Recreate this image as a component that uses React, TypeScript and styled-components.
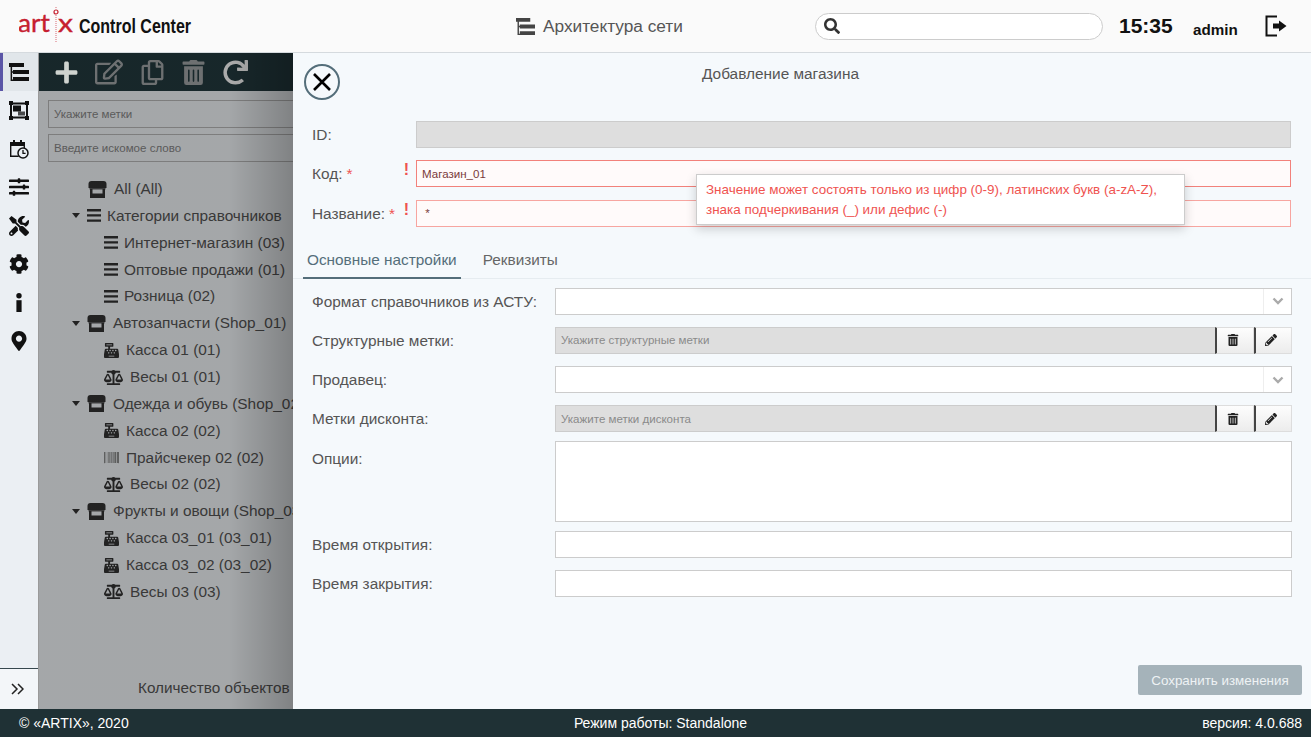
import React from "react";
import styled, { createGlobalStyle } from "styled-components";
import {
  FaBalanceScale,
  FaBarcode,
  FaCashRegister,
  FaCog,
  FaMapMarkerAlt,
  FaPencilAlt,
  FaPlus,
  FaRedo,
  FaRegCopy,
  FaRegEdit,
  FaSearch,
  FaSlidersH,
  FaTools,
  FaTrashAlt,
} from "react-icons/fa";

const GlobalStyle = createGlobalStyle`
  html, body {
    margin: 0;
    height: 100%;
    overflow: hidden;
    font-family: "Liberation Sans", Arial, sans-serif;
  }
  #root {
    height: 100%;
  }
  * {
    box-sizing: border-box;
  }
`;

const Page = styled.div`
  display: flex;
  flex-direction: column;
  width: 1311px;
  height: 737px;
  background: #f5f9fc;
`;

/* top bar */
const Header = styled.header`
  display: grid;
  grid-template-columns: 516px 299px 304px 74px 71px 47px;
  align-items: center;
  height: 53px;
  flex: none;
  background: #fafafa;
  border-bottom: 1px solid #d5dade;
`;

const Brand = styled.div`
  display: flex;
  align-items: center;
  padding-left: 19px;
`;

const Logo = styled.svg`
  width: 54px;
  height: 38px;
  flex: none;
  text {
    font-family: Lato, sans-serif;
    font-size: 25px;
    fill: #c6202f;
    stroke: #c6202f;
    stroke-width: 0.35px;
  }
`;

const BrandName = styled.span`
  display: inline-block;
  font-weight: 700;
  font-size: 20px;
  color: #111;
  margin-left: 6px;
  white-space: nowrap;
  transform: scaleX(0.8);
  transform-origin: left center;
`;

const PageTitle = styled.div`
  display: flex;
  align-items: center;
  gap: 8px;
  font-size: 17.25px;
  color: #555;
  svg {
    width: 19px;
    height: 19px;
    color: #444;
  }
`;

const SearchBox = styled.div`
  display: flex;
  align-items: center;
  width: 288px;
  height: 27px;
  padding-left: 8px;
  background: #fff;
  border: 1px solid #ccc;
  border-radius: 14px;
  font-size: 16px;
  color: #333;
`;

const Clock = styled.div`
  font-size: 21px;
  font-weight: 700;
  color: #111;
`;

const UserName = styled.div`
  font-size: 15.2px;
  font-weight: 700;
  color: #111;
  margin-top: 6px;
`;

const Logout = styled.svg`
  width: 25px;
  height: 24px;
`;

const Body = styled.div`
  display: flex;
  flex: 1;
  min-height: 0;
`;

/* left rail */
const Rail = styled.nav`
  display: flex;
  flex-direction: column;
  width: 38px;
  flex: none;
  background: #ebeff3;
`;

const RailItem = styled.div<{ $active?: boolean }>`
  display: flex;
  align-items: center;
  justify-content: center;
  height: 38.4px;
  flex: none;
  font-size: 20px;
  color: #111;
  background: ${(p) => (p.$active ? "#e1e6ea" : "transparent")};
  box-shadow: ${(p) => (p.$active ? "inset 3px 0 0 #5a55a6" : "none")};
  svg {
    display: block;
  }
`;

const RailFooter = styled.div`
  display: flex;
  align-items: center;
  justify-content: center;
  height: 41px;
  margin-top: auto;
  border-top: 1px solid #36474d;
  background: #f3f6f9;
  padding-right: 3px;
`;

/* dimmed list behind the drawer */
const Main = styled.main`
  position: relative;
  display: flex;
  flex-direction: column;
  flex: 1;
  min-width: 0;
  overflow: hidden;
  background: #f5f9fc;
  border-left: 1px solid #9a9a9a;
`;

const Toolbar = styled.div`
  display: flex;
  align-items: center;
  height: 38px;
  flex: none;
  padding-left: 15px;
  background: #233a3f;
`;

const ToolButton = styled.span<{ $left: number; $size?: number; $bright?: boolean; $lifted?: boolean }>`
  position: relative;
  z-index: ${(p) => (p.$lifted ? 1 : 0)};
  display: flex;
  margin-left: ${(p) => p.$left}px;
  font-size: ${(p) => p.$size ?? 25}px;
  color: ${(p) => (p.$lifted ? "#cfd3cf" : p.$bright ? "#ffffff" : "#a3a7a9")};
`;

const FilterInput = styled.input`
  display: block;
  width: 400px;
  height: 28px;
  margin: 0 0 6px 9px;
  padding: 0 5px;
  background: #f5f9fc;
  border: 1px solid #bbb;
  font-family: inherit;
  font-size: 11.55px;
  &::placeholder {
    color: #888;
    opacity: 1;
  }
`;

const Filters = styled.div`
  padding-top: 9px;
  flex: none;
`;

const Tree = styled.ul`
  list-style: none;
  margin: 0;
  padding: 7.6px 0 0;
`;

const TreeRow = styled.li<{ $indent: number }>`
  display: flex;
  align-items: center;
  height: 26.87px;
  padding-left: ${(p) => p.$indent}px;
  gap: 7px;
  font-size: 15.4px;
  color: #555;
  white-space: nowrap;
`;

const Caret = styled.span`
  width: 0;
  height: 0;
  border-left: 4.5px solid transparent;
  border-right: 4.5px solid transparent;
  border-top: 5px solid #333;
`;

const TreeIcon = styled.span<{ $size?: number; $muted?: boolean }>`
  display: flex;
  font-size: ${(p) => p.$size ?? 15}px;
  color: ${(p) => (p.$muted ? "#666" : "#333")};
`;

const StoreSvg = styled.svg`
  display: block;
  width: 19px;
  height: 17px;
  color: #333;
`;

const BarsSvg = styled.svg`
  display: block;
  width: 14px;
  height: 13px;
  margin-right: -1px;
  color: #333;
`;

const MainFooter = styled.div`
  margin-top: auto;
  padding: 0 0 12px 99px;
  font-size: 15.3px;
  line-height: 18px;
  color: #555;
  white-space: nowrap;
`;

const Dim = styled.div`
  position: absolute;
  inset: 0;
  background: linear-gradient(
    to right,
    rgba(0, 0, 0, 0.33) 0,
    rgba(0, 0, 0, 0.33) 190px,
    rgba(0, 0, 0, 0.48) 254px
  );
`;

/* drawer */
const Drawer = styled.section`
  position: absolute;
  z-index: 2;
  top: 0;
  bottom: 0;
  left: 254px;
  right: 0;
  display: flex;
  flex-direction: column;
  background: #f5f9fc;
`;

const DrawerHead = styled.div`
  display: flex;
  padding: 11px 90px 21px 11px;
  flex: none;
`;

const CloseButton = styled.span`
  display: flex;
  align-items: center;
  justify-content: center;
  width: 36px;
  height: 36px;
  flex: none;
  border: 2.5px solid #546e7a;
  border-radius: 50%;
  svg {
    width: 22px;
    height: 22px;
  }
`;

const DrawerTitle = styled.h2`
  flex: 1;
  margin: 0;
  padding-top: 1px;
  text-align: center;
  font-size: 15.4px;
  line-height: 18px;
  font-weight: 400;
  color: #555;
`;

const Fields = styled.div`
  display: flex;
  flex-direction: column;
  gap: 12.3px;
  padding: 0 19px;
  flex: none;
`;

const TopFields = styled(Fields)`
  position: relative;
  padding-right: 20px;
`;

const Label = styled.label`
  position: relative;
  font-size: 15.4px;
  line-height: 27px;
  color: #555;
`;

const Row = styled.div<{ $label: number; $tall?: boolean }>`
  display: grid;
  grid-template-columns: ${(p) => p.$label}px 1fr;
  align-items: start;
  margin: ${(p) => (p.$tall ? "-4px 0 -3.5px" : "0")};
  ${Label} {
    padding-top: ${(p) => (p.$tall ? "4px" : "0")};
  }
`;

const Required = styled.span`
  color: #ef5350;
  margin-left: 4px;
`;

const Alert = styled.span`
  position: absolute;
  top: -3px;
  right: 7px;
  font-size: 16px;
  font-weight: 700;
  line-height: 26px;
  color: #ef5350;
`;

const TextInput = styled.input<{ $error?: boolean; $pale?: boolean; $grey?: boolean }>`
  display: block;
  width: 100%;
  height: 27px;
  padding: 0 5px;
  font-family: inherit;
  font-size: 11.55px;
  color: #7a3b3b;
  outline: none;
  background: ${(p) => (p.$error ? "#fffafa" : p.$grey ? "#dedede" : "#fff")};
  border: 1px solid ${(p) => (p.$error ? (p.$pale ? "#f7a5a0" : "#f2817b") : "#ccc")};
  &::placeholder {
    color: #8a8a8a;
    opacity: 1;
  }
`;

const OptionsArea = styled.div`
  height: 81px;
  background: #fff;
  border: 1px solid #ccc;
`;

const SelectBox = styled.div`
  display: flex;
  justify-content: flex-end;
  height: 27px;
  background: #fff;
  border: 1px solid #ccc;
`;

const SelectArrow = styled.span`
  display: flex;
  align-items: center;
  justify-content: center;
  width: 28px;
  border-left: 1px solid #eee;
  svg {
    width: 12px;
    height: 8px;
  }
`;

const Picker = styled.div`
  display: flex;
  height: 27px;
`;

const PickerInput = styled(TextInput)`
  flex: 1;
  border-right: none;
`;

const PickerButton = styled.span`
  display: flex;
  align-items: center;
  justify-content: center;
  width: 38.5px;
  flex: none;
  padding-right: 4px;
  font-size: 12px;
  color: #222;
  background: linear-gradient(#fdfdfd, #ececec);
  border: 1px solid #ddd;
  border-left: 2px solid #444;
`;

const Tabs = styled.div`
  display: flex;
  height: 34px;
  margin: 18px 0 9px;
  padding-left: 10px;
  flex: none;
  border-bottom: 1px solid #e6ecf0;
`;

const Tab = styled.span<{ $active?: boolean }>`
  height: 34px;
  margin-right: 18px;
  padding: 0 4px;
  font-size: 15.35px;
  line-height: 30px;
  color: ${(p) => (p.$active ? "#546e7a" : "#666")};
  border-bottom: 2px solid ${(p) => (p.$active ? "#546e7a" : "transparent")};
`;

const Hint = styled.div`
  position: absolute;
  top: 53px;
  left: 403px;
  width: 489px;
  padding: 5px 9px 4px;
  background: #fff;
  border: 1px solid #ccc;
  box-shadow: 0 4px 10px rgba(0, 0, 0, 0.18);
  font-size: 13.45px;
  line-height: 20px;
  color: #ef5350;
  white-space: nowrap;
`;

const DrawerActions = styled.div`
  display: flex;
  justify-content: flex-end;
  margin-top: auto;
  padding: 0 9px 14px 0;
`;

const SaveButton = styled.span`
  width: 164px;
  height: 30px;
  text-align: center;
  font-size: 13.4px;
  line-height: 31px;
  color: #eef2f4;
  background: #a5b3ba;
  border-radius: 2px;
`;

const Footer = styled.footer`
  display: grid;
  grid-template-columns: 1fr auto 1fr;
  align-items: center;
  height: 28px;
  flex: none;
  padding: 0 9px 0 19px;
  background: #1f3135;
  font-size: 14px;
  color: #fff;
`;

const FooterRight = styled.span`
  text-align: right;
`;

function SiteTree() {
  return (
    <svg viewBox="0 0 20 18" width="20" height="18" fill="currentColor">
      <path d="M0 0h15v4H0zM4 7h16v4H4zM4 14h16v4H4zM1.6 4h1.5v12.6H4V18H1.6zM3 8.3h1v1.4H3z" />
    </svg>
  );
}

function FrameIcon() {
  return (
    <svg viewBox="0 0 20 20" width="20" height="20">
      <rect x="2" y="2.5" width="16" height="14" fill="none" stroke="#111" strokeWidth="2" />
      <rect x="4" y="4.5" width="8" height="6" fill="#111" />
      <rect x="9" y="10.5" width="7" height="4" fill="#111" opacity="0.75" />
      <path d="M0 0h4v4H0zM16 0h4v4h-4zM0 15h4v4H0zM16 15h4v4h-4z" fill="#111" />
    </svg>
  );
}

function CalendarClock() {
  return (
    <svg viewBox="0 0 20 20" width="20" height="20">
      <path d="M1 3h15v4H1z" fill="#111" />
      <path d="M4 1h2v3H4zM11 1h2v3h-2z" fill="#111" />
      <path d="M1.7 6v11.3h8" fill="none" stroke="#111" strokeWidth="1.4" />
      <path d="M15.3 6v3" fill="none" stroke="#111" strokeWidth="1.4" />
      <circle cx="14" cy="14" r="5" fill="#ebeff3" stroke="#111" strokeWidth="1.5" />
      <path d="M14 11v3.3h2.6" fill="none" stroke="#111" strokeWidth="1.3" />
    </svg>
  );
}

function InfoIcon() {
  return (
    <svg viewBox="0 0 6 19" width="6" height="19" fill="#111">
      <circle cx="3" cy="2.8" r="2.7" />
      <path d="M.4 7.2h5.2V19H.4z" />
    </svg>
  );
}

function StoreIcon() {
  return (
    <StoreSvg viewBox="0 0 18 17" fill="currentColor">
      <path d="M3 0h12a3 3 0 0 1 3 3v4H0V3a3 3 0 0 1 3-3z" />
      <path d="M1.5 8H4v4.5h10V8h2.5v9h-15z" />
      <path d="M1 7.2h16v1.2H1z" />
    </StoreSvg>
  );
}

function BarsIcon() {
  return (
    <BarsSvg viewBox="0 0 14 13" fill="currentColor">
      <path d="M0 0h14v2.4H0zM0 5.2h14v2.4H0zM0 10.4h14v2.4H0z" />
    </BarsSvg>
  );
}

function Chevron() {
  return (
    <svg viewBox="0 0 12 8">
      <path d="M1.5 1.5 6 6l4.5-4.5" fill="none" stroke="#aaa" strokeWidth="2.4" />
    </svg>
  );
}

type Node = { text: string; kind: "store" | "bars" | "cash" | "scale" | "code"; indent: number; caret?: boolean };

const nodes: Node[] = [
  { text: "All (All)", kind: "store", indent: 49 },
  { text: "Категории справочников", kind: "bars", indent: 33, caret: true },
  { text: "Интернет-магазин (03)", kind: "bars", indent: 65 },
  { text: "Оптовые продажи (01)", kind: "bars", indent: 65 },
  { text: "Розница (02)", kind: "bars", indent: 65 },
  { text: "Автозапчасти (Shop_01)", kind: "store", indent: 33, caret: true },
  { text: "Касса 01 (01)", kind: "cash", indent: 65 },
  { text: "Весы 01 (01)", kind: "scale", indent: 65 },
  { text: "Одежда и обувь (Shop_02)", kind: "store", indent: 33, caret: true },
  { text: "Касса 02 (02)", kind: "cash", indent: 65 },
  { text: "Прайсчекер 02 (02)", kind: "code", indent: 65 },
  { text: "Весы 02 (02)", kind: "scale", indent: 65 },
  { text: "Фрукты и овощи (Shop_03)", kind: "store", indent: 33, caret: true },
  { text: "Касса 03_01 (03_01)", kind: "cash", indent: 65 },
  { text: "Касса 03_02 (03_02)", kind: "cash", indent: 65 },
  { text: "Весы 03 (03)", kind: "scale", indent: 65 },
];

function NodeIcon({ kind }: { kind: Node["kind"] }) {
  if (kind === "store") return <StoreIcon />;
  if (kind === "bars") return <BarsIcon />;
  if (kind === "cash") return <TreeIcon><FaCashRegister /></TreeIcon>;
  if (kind === "scale") return <TreeIcon $size={19}><FaBalanceScale /></TreeIcon>;
  return <TreeIcon $muted><FaBarcode /></TreeIcon>;
}

export default function App() {
  return (
    <Page>
      <GlobalStyle />
      <Header>
        <Brand>
          <Logo viewBox="0 0 54 38">
            <text x="-1" y="25" textLength="32" lengthAdjust="spacingAndGlyphs">art</text>
            <circle cx="37" cy="5" r="2" fill="none" stroke="#c6202f" strokeWidth="1.2" />
            <path d="M37 0v2.2M37 8v28" stroke="#e39aa1" strokeWidth="1.5" strokeDasharray="1 1" />
            <text x="39" y="25" textLength="15" lengthAdjust="spacingAndGlyphs">x</text>
          </Logo>
          <BrandName>Control Center</BrandName>
        </Brand>
        <PageTitle>
          <SiteTree />
          Архитектура сети
        </PageTitle>
        <SearchBox>
          <FaSearch />
        </SearchBox>
        <Clock>15:35</Clock>
        <UserName>admin</UserName>
        <Logout viewBox="0 0 25 24">
          <path d="M13 2.5H2.5v19H13" fill="none" stroke="#111" strokeWidth="2" />
          <path d="M9 9.5h6V6.5l7.5 5.5-7.5 5.5v-3H9z" fill="#111" />
        </Logout>
      </Header>
      <Body>
        <Rail>
          <RailItem $active><SiteTree /></RailItem>
          <RailItem><FrameIcon /></RailItem>
          <RailItem><CalendarClock /></RailItem>
          <RailItem><FaSlidersH /></RailItem>
          <RailItem><FaTools /></RailItem>
          <RailItem><FaCog /></RailItem>
          <RailItem><InfoIcon /></RailItem>
          <RailItem><FaMapMarkerAlt /></RailItem>
          <RailFooter>
            <svg viewBox="0 0 13 12" width="13" height="12">
              <path d="M1 1l5 5-5 5M7 1l5 5-5 5" fill="none" stroke="#222" strokeWidth="1.5" />
            </svg>
          </RailFooter>
        </Rail>
        <Main>
          <Toolbar>
            <ToolButton $left={0} $lifted><FaPlus /></ToolButton>
            <ToolButton $left={16} $size={28}><FaRegEdit /></ToolButton>
            <ToolButton $left={17}><FaRegCopy /></ToolButton>
            <ToolButton $left={16}><FaTrashAlt /></ToolButton>
            <ToolButton $left={17} $bright><FaRedo /></ToolButton>
          </Toolbar>
          <Filters>
            <FilterInput placeholder="Укажите метки" readOnly />
            <FilterInput placeholder="Введите искомое слово" readOnly />
          </Filters>
          <Tree>
            {nodes.map((n) => (
              <TreeRow key={n.text} $indent={n.indent}>
                {n.caret && <Caret />}
                <NodeIcon kind={n.kind} />
                {n.text}
              </TreeRow>
            ))}
          </Tree>
          <MainFooter>Количество объектов</MainFooter>
          <Dim />
          <Drawer>
            <DrawerHead>
              <CloseButton>
                <svg viewBox="0 0 22 22">
                  <path d="M3 3l16 16M19 3 3 19" stroke="#000" strokeWidth="2.6" />
                </svg>
              </CloseButton>
              <DrawerTitle>Добавление магазина</DrawerTitle>
            </DrawerHead>
            <TopFields>
              <Row $label={104}>
                <Label>ID:</Label>
                <TextInput $grey readOnly />
              </Row>
              <Row $label={104}>
                <Label>
                  Код:<Required>*</Required>
                  <Alert>!</Alert>
                </Label>
                <TextInput $error value="Магазин_01" readOnly />
              </Row>
              <Row $label={104}>
                <Label>
                  Название:<Required>*</Required>
                  <Alert>!</Alert>
                </Label>
                <TextInput $error $pale value=" *" readOnly />
              </Row>
              <Hint>
                Значение может состоять только из цифр (0-9), латинских букв (a-zA-Z),
                <br />
                знака подчеркивания (_) или дефис (-)
              </Hint>
            </TopFields>
            <Tabs>
              <Tab $active>Основные настройки</Tab>
              <Tab>Реквизиты</Tab>
            </Tabs>
            <Fields>
              <Row $label={243}>
                <Label>Формат справочников из АСТУ:</Label>
                <SelectBox><SelectArrow><Chevron /></SelectArrow></SelectBox>
              </Row>
              <Row $label={243}>
                <Label>Структурные метки:</Label>
                <Picker>
                  <PickerInput $grey placeholder="Укажите структурные метки" readOnly />
                  <PickerButton><FaTrashAlt /></PickerButton>
                  <PickerButton><FaPencilAlt /></PickerButton>
                </Picker>
              </Row>
              <Row $label={243}>
                <Label>Продавец:</Label>
                <SelectBox><SelectArrow><Chevron /></SelectArrow></SelectBox>
              </Row>
              <Row $label={243}>
                <Label>Метки дисконта:</Label>
                <Picker>
                  <PickerInput $grey placeholder="Укажите метки дисконта" readOnly />
                  <PickerButton><FaTrashAlt /></PickerButton>
                  <PickerButton><FaPencilAlt /></PickerButton>
                </Picker>
              </Row>
              <Row $label={243} $tall>
                <Label>Опции:</Label>
                <OptionsArea />
              </Row>
              <Row $label={243}>
                <Label>Время открытия:</Label>
                <TextInput readOnly />
              </Row>
              <Row $label={243}>
                <Label>Время закрытия:</Label>
                <TextInput readOnly />
              </Row>
            </Fields>
            <DrawerActions>
              <SaveButton>Сохранить изменения</SaveButton>
            </DrawerActions>
          </Drawer>
        </Main>
      </Body>
      <Footer>
        <span>© «ARTIX», 2020</span>
        <span>Режим работы: Standalone</span>
        <FooterRight>версия: 4.0.688</FooterRight>
      </Footer>
    </Page>
  );
}
